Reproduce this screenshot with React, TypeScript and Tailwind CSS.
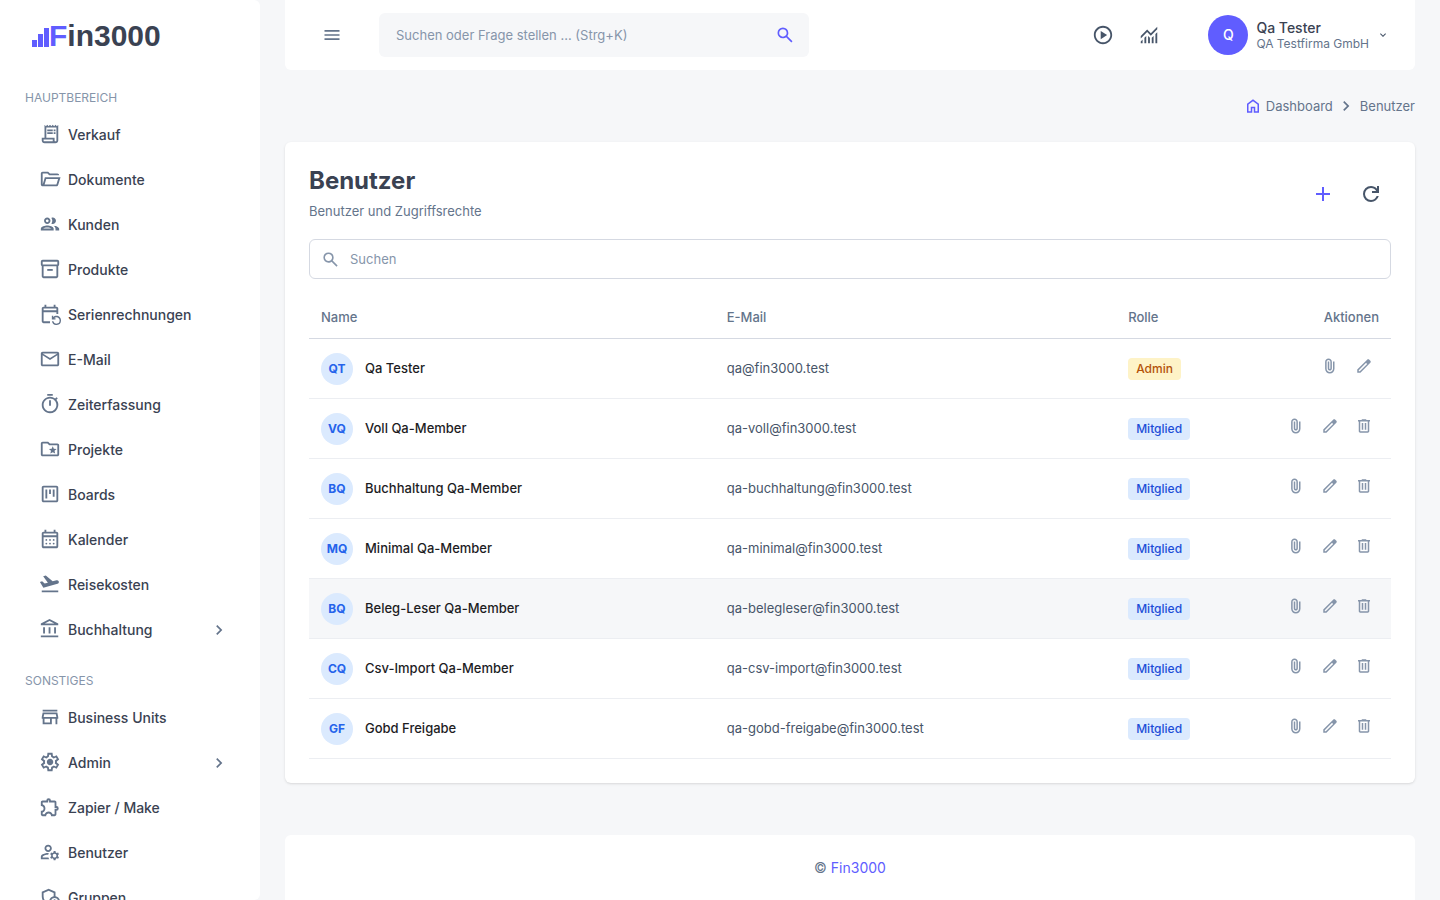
import type { ReactNode } from "react";
import type { IconType } from "react-icons";
import {
    MdAdd,
    MdChevronRight,
    MdKeyboardArrowDown,
    MdMenu,
    MdOutlineAccountBalance,
    MdOutlineAdminPanelSettings,
    MdOutlineEventRepeat,
    MdOutlineExtension,
    MdOutlineFolderSpecial,
    MdOutlineGroup,
    MdOutlineInventory2,
    MdOutlineMail,
    MdOutlineManageAccounts,
    MdOutlinePlayCircle,
    MdOutlineReceiptLong,
    MdOutlineStore,
    MdOutlineTimer,
    MdOutlineViewKanban,
} from "react-icons/md";

type IconProps = { className?: string };

function Symbol({ d, className }: { d: string; className?: string }) {
    return (
        <svg viewBox="0 -960 960 960" fill="currentColor" className={className} aria-hidden="true">
            <path d={d} />
        </svg>
    );
}

const HomeIcon = ({ className }: IconProps) => (
    <Symbol
        className={className}
        d="M240-200h120v-240h240v240h120v-360L480-740 240-560v360Zm-80 80v-480l320-240 320 240v480H520v-240h-80v240H160Z"
    />
);

const SearchIcon = ({ className }: IconProps) => (
    <Symbol
        className={className}
        d="M784-120 532-372q-30 24-69 38t-83 14q-109 0-184.500-75.500T120-580q0-109 75.500-184.500T380-840q109 0 184.500 75.500T640-580q0 44-14 83t-38 69l252 252-56 56ZM380-400q75 0 127.500-52.500T560-580q0-75-52.500-127.500T380-760q-75 0-127.500 52.500T200-580q0 75 52.500 127.500T380-400Z"
    />
);

const RefreshIcon = ({ className }: IconProps) => (
    <Symbol
        className={className}
        d="M480-160q-134 0-227-93t-93-227q0-134 93-227t227-93q69 0 132 28.500T720-690v-110h80v280H520v-80h168q-32-56-87.500-88T480-720q-100 0-170 70t-70 170q0 100 70 170t170 70q77 0 139-44t87-116h84q-28 106-114 173t-196 67Z"
    />
);

const FolderOpenIcon = ({ className }: IconProps) => (
    <Symbol
        className={className}
        d="M160-160q-33 0-56.500-23.500T80-240v-480q0-33 23.500-56.500T160-800h240l80 80h320q33 0 56.500 23.500T880-640H447l-80-80H160v480l96-320h684L837-217q-8 26-29.500 41.500T760-160H160Zm84-80h516l72-240H316l-72 240Z"
    />
);

const CalendarIcon = ({ className }: IconProps) => (
    <svg viewBox="0 -960 960 960" fill="currentColor" className={className} aria-hidden="true">
        <path d="M200-80q-33 0-56.500-23.500T120-160v-560q0-33 23.500-56.500T200-800h40v-80h80v80h320v-80h80v80h40q33 0 56.500 23.500T840-720v560q0 33-23.500 56.500T760-80H200Zm0-80h560v-400H200v400Zm0-480h560v-80H200v80Z" />
        {[320, 480, 640].map((cx) => (
            <g key={cx}>
                <circle cx={cx} cy="-440" r="40" />
                <circle cx={cx} cy="-280" r="40" />
            </g>
        ))}
    </svg>
);

const FlightIcon = ({ className }: IconProps) => (
    <Symbol
        className={className}
        d="M120-120v-80h720v80H120Zm70-200L40-570l96-26 112 94 140-37-207-276 116-31 299 251 170-46q32-9 60.500 7.500T864-585q9 32-7.500 60.500T808-487L190-320Z"
    />
);

const AttachIcon = ({ className }: IconProps) => (
    <Symbol
        className={className}
        d="M720-330q0 104-73 177T470-80q-104 0-177-73t-73-177v-370q0-75 52.500-127.500T400-880q75 0 127.500 52.500T580-700v350q0 46-32 78t-78 32q-46 0-78-32t-32-78v-370h80v370q0 13 8.500 21.500T470-320q13 0 21.500-8.500T500-350v-350q-1-42-29.500-71T400-800q-42 0-71 29t-29 71v370q-1 71 49 120.500T470-160q70 0 119-49.500T640-330v-390h80v390Z"
    />
);

const MonitoringIcon = ({ className }: IconProps) => (
    <Symbol
        className={className}
        d="M120-120v-80l80-80v160h-80Zm160 0v-240l80-80v320h-80Zm160 0v-320l80 81v239h-80Zm160 0v-239l80-80v319h-80Zm160 0v-400l80-80v480h-80ZM120-327v-113l280-280 160 160 280-280v113L560-447 400-607 120-327Z"
    />
);

const SettingsIcon = ({ className }: IconProps) => (
    <Symbol
        className={className}
        d="m370-80-16-128q-13-5-24.500-12T307-235l-119 50L78-375l103-78q-1-7-1-13.500v-27q0-6.500 1-13.500L78-585l110-190 119 50q11-8 23-15t24-12l16-128h220l16 128q13 5 24.500 12t22.500 15l119-50 110 190-103 78q1 7 1 13.500v27q0 6.500-2 13.500l103 78-110 190-118-50q-11 8-23 15t-24 12L590-80H370Zm70-80h79l14-106q31-8 57.500-23.500T639-327l99 41 39-68-86-65q5-14 7-29.500t2-31.500q0-16-2-31.500t-7-29.500l86-65-39-68-99 42q-22-23-48.500-38.500T533-694l-13-106h-79l-14 106q-31 8-57.500 23.500T321-633l-99-41-39 68 86 64q-5 15-7 30t-2 32q0 16 2 31t7 30l-86 65 39 68 99-42q22 23 48.500 38.500T427-266l13 106Zm42-180q58 0 99-41t41-99q0-58-41-99t-99-41q-59 0-99.500 41T342-480q0 58 40.500 99t99.500 41Z"
    />
);

const EditIcon = ({ className }: IconProps) => (
    <Symbol
        className={className}
        d="M200-200h57l391-391-57-57-391 391v57Zm-80 80v-170l528-527q12-11 26.500-17t30.500-6q16 0 31 6t26 18l55 56q12 11 17.500 26t5.500 30q0 16-5.500 30.500T817-647L290-120H120Zm640-584-56-56 56 56Zm-141 85-28-29 57 57-29-28Z"
    />
);

const DeleteIcon = ({ className }: IconProps) => (
    <Symbol
        className={className}
        d="M280-120q-33 0-56.500-23.500T200-200v-520h-40v-80h200v-40h240v40h200v80h-40v520q0 33-23.500 56.500T680-120H280Zm400-600H280v520h400v-520ZM360-280h80v-360h-80v360Zm160 0h80v-360h-80v360Z"
    />
);

type NavEntry = {
    label: string;
    icon: IconType | ((props: IconProps) => ReactNode);
    hasChildren?: boolean;
};

const mainNav: NavEntry[] = [
    { label: "Verkauf", icon: MdOutlineReceiptLong },
    { label: "Dokumente", icon: FolderOpenIcon },
    { label: "Kunden", icon: MdOutlineGroup },
    { label: "Produkte", icon: MdOutlineInventory2 },
    { label: "Serienrechnungen", icon: MdOutlineEventRepeat },
    { label: "E-Mail", icon: MdOutlineMail },
    { label: "Zeiterfassung", icon: MdOutlineTimer },
    { label: "Projekte", icon: MdOutlineFolderSpecial },
    { label: "Boards", icon: MdOutlineViewKanban },
    { label: "Kalender", icon: CalendarIcon },
    { label: "Reisekosten", icon: FlightIcon },
    { label: "Buchhaltung", icon: MdOutlineAccountBalance, hasChildren: true },
];

const otherNav: NavEntry[] = [
    { label: "Business Units", icon: MdOutlineStore },
    { label: "Admin", icon: SettingsIcon, hasChildren: true },
    { label: "Zapier / Make", icon: MdOutlineExtension },
    { label: "Benutzer", icon: MdOutlineManageAccounts },
    { label: "Gruppen", icon: MdOutlineAdminPanelSettings },
];

const users = [
    { initials: "QT", name: "Qa Tester", email: "qa@fin3000.test", role: "Admin" },
    { initials: "VQ", name: "Voll Qa-Member", email: "qa-voll@fin3000.test", role: "Mitglied" },
    { initials: "BQ", name: "Buchhaltung Qa-Member", email: "qa-buchhaltung@fin3000.test", role: "Mitglied" },
    { initials: "MQ", name: "Minimal Qa-Member", email: "qa-minimal@fin3000.test", role: "Mitglied" },
    { initials: "BQ", name: "Beleg-Leser Qa-Member", email: "qa-belegleser@fin3000.test", role: "Mitglied", active: true },
    { initials: "CQ", name: "Csv-Import Qa-Member", email: "qa-csv-import@fin3000.test", role: "Mitglied" },
    { initials: "GF", name: "Gobd Freigabe", email: "qa-gobd-freigabe@fin3000.test", role: "Mitglied" },
];

function Logo() {
    return (
        <a href="#" aria-label="Fin3000" className="flex h-9 items-center pl-8">
            <svg viewBox="0 0 17 24" className="h-6 w-[17px] text-[#605dff]" fill="currentColor" aria-hidden="true">
                <rect x="0" y="16" width="5" height="7" />
                <rect x="6" y="10" width="5" height="13" />
                <rect x="12" y="4" width="5" height="19" />
            </svg>
            <span className="font-['Liberation_Sans',sans-serif] text-3xl leading-9 font-bold text-[#3a4252]">
                <span className="text-[#605dff]">F</span>in3000
            </span>
        </a>
    );
}

function NavSection({ title, entries }: { title: string; entries: NavEntry[] }) {
    return (
        <div className="mb-[21px]">
            <h2 className="mb-1.5 pl-[25px] text-xs font-normal text-[#8695aa] uppercase">{title}</h2>
            <ul>
                {entries.map(({ label, icon: Icon, hasChildren }) => (
                    <li key={label}>
                        <a href="#" className="flex h-[45px] items-center pr-[31px] pl-[39px] text-sm font-medium text-[#3a4252]">
                            <Icon className="mr-[7px] mb-0.5 size-[22px] shrink-0 text-[#64748b]" />
                            <span className="flex-1">{label}</span>
                            {hasChildren && <MdChevronRight className="size-5 text-[#64748b]" />}
                        </a>
                    </li>
                ))}
            </ul>
        </div>
    );
}

function Header() {
    return (
        <header className="flex h-[70px] items-center rounded-b-md bg-white pr-[26px] pl-[37px]">
            <button type="button" aria-label="Menü" className="mr-[37px] text-[#64748b]">
                <MdMenu className="size-5" />
            </button>
            <form className="flex h-11 w-[430px] items-center rounded-md bg-[#f6f7f9] pr-[14px] pl-[17px]">
                <input
                    type="text"
                    aria-label="Suchen oder Frage stellen"
                    placeholder="Suchen oder Frage stellen ... (Strg+K)"
                    className="min-w-0 flex-1 bg-transparent pt-0.5 text-[13px] outline-none placeholder:text-[#8695aa]"
                />
                <button type="button" aria-label="Suche starten" className="text-[#605dff]">
                    <SearchIcon className="size-5" />
                </button>
            </form>
            <div className="ml-auto flex items-center text-[#475569]">
                <button type="button" aria-label="Abspielen" className="mr-6">
                    <MdOutlinePlayCircle className="size-[22px]" />
                </button>
                <button type="button" aria-label="Auswertungen" className="mr-12">
                    <MonitoringIcon className="size-[22px]" />
                </button>
                <button type="button" className="flex items-center text-left">
                    <span className="mr-2 flex size-10 items-center justify-center rounded-full bg-[#605dff] text-sm font-medium text-white">
                        Q
                    </span>
                    <span className="mr-2 flex flex-col pt-0.5">
                        <span className="text-sm leading-4 font-medium text-[#3a4252]">Qa Tester</span>
                        <span className="text-xs leading-4 text-[#64748b]">QA Testfirma GmbH</span>
                    </span>
                    <MdKeyboardArrowDown className="size-3" />
                </button>
            </div>
        </header>
    );
}

function UserTable() {
    return (
        <table className="mt-4 w-full table-fixed border-collapse text-[13px]">
            <thead>
                <tr className="h-[43px] border-b border-[#d5d9e2] text-left text-[#64748b]">
                    <th className="w-[37.5%] px-3 pt-0.5 font-medium">Name</th>
                    <th className="w-[37.1%] px-3 pt-0.5 font-medium">E-Mail</th>
                    <th className="w-[10%] px-3 pt-0.5 font-medium">Rolle</th>
                    <th className="px-3 pt-0.5 text-right font-medium">Aktionen</th>
                </tr>
            </thead>
            <tbody>
                {users.map((user) => (
                    <tr
                        key={user.email}
                        className={`h-[60px] border-b border-[#eceef2] ${user.active ? "bg-[#f6f7f9]" : "hover:bg-[#f6f7f9]"}`}
                    >
                        <td className="px-3 pt-0.5">
                            <div className="flex items-center">
                                <span className="mr-3 flex size-8 items-center justify-center rounded-full bg-[#dbeafe] text-xs font-bold text-[#2563eb]">
                                    {user.initials}
                                </span>
                                <span className="font-medium text-[#1d1d1f]">{user.name}</span>
                            </div>
                        </td>
                        <td className="px-3 pt-0.5 text-[#475569]">{user.email}</td>
                        <td className="px-3 pt-0.5">
                            <span
                                className={`inline-flex h-[22px] items-center rounded-sm px-2 text-xs font-medium ${
                                    user.role === "Admin" ? "bg-[#fef3c7] text-[#b45309]" : "bg-[#dbeafe] text-[#1d4ed8]"
                                }`}
                            >
                                {user.role}
                            </span>
                        </td>
                        <td className="px-3 pb-1">
                            <div className="flex justify-end gap-1 text-[#8695aa]">
                                <button type="button" aria-label="Anhänge" className="flex size-[30px] items-center justify-center">
                                    <AttachIcon className="size-[18px]" />
                                </button>
                                <button type="button" aria-label="Bearbeiten" className="flex size-[30px] items-center justify-center">
                                    <EditIcon className="size-[18px]" />
                                </button>
                                {user.role !== "Admin" && (
                                    <button type="button" aria-label="Löschen" className="flex size-[30px] items-center justify-center">
                                        <DeleteIcon className="size-[18px]" />
                                    </button>
                                )}
                            </div>
                        </td>
                    </tr>
                ))}
            </tbody>
        </table>
    );
}

export default function App() {
    return (
        <div className="flex min-h-screen bg-[#f6f7f9] font-['Inter',sans-serif]">
            {/* Sidebar */}
            <aside className="sticky top-0 h-screen w-[260px] shrink-0 overflow-hidden rounded-r-md bg-white pt-[18px]">
                <Logo />
                <nav className="mt-9">
                    <NavSection title="Hauptbereich" entries={mainNav} />
                    <NavSection title="Sonstiges" entries={otherNav} />
                </nav>
            </aside>

            <div className="flex min-w-0 flex-1 flex-col px-[25px]">
                <Header />

                {/* Breadcrumb */}
                <nav aria-label="Breadcrumb" className="flex items-center justify-end py-[26px] text-[13px] leading-5 text-[#64748b]">
                    <a href="#" className="flex items-center">
                        <HomeIcon className="mr-1 size-[18px] text-[#605dff]" />
                        Dashboard
                    </a>
                    <MdChevronRight className="mr-1 ml-[3px] size-5" />
                    <span>Benutzer</span>
                </nav>

                <main className="rounded-md bg-white p-6 shadow-sm">
                    <div className="mb-[17px] flex items-center justify-between">
                        <div>
                            <h1 className="text-2xl leading-[30px] font-bold text-[#3a4252]">Benutzer</h1>
                            <p className="mt-[5px] mb-px text-[13px] leading-5 text-[#64748b]">Benutzer und Zugriffsrechte</p>
                        </div>
                        <div className="flex gap-2">
                            <button type="button" aria-label="Hinzufügen" className="flex size-10 items-center justify-center text-[#605dff]">
                                <MdAdd className="size-6" />
                            </button>
                            <button type="button" aria-label="Aktualisieren" className="flex size-10 items-center justify-center text-[#475569]">
                                <RefreshIcon className="size-6" />
                            </button>
                        </div>
                    </div>

                    <label className="flex h-10 items-center rounded-md border border-[#d5d9e2] px-[11px]">
                        <SearchIcon className="mr-[10px] size-[19px] text-[#8695aa]" />
                        <input
                            type="text"
                            aria-label="Suchen"
                            placeholder="Suchen"
                            className="min-w-0 flex-1 bg-transparent pt-0.5 text-[13px] outline-none placeholder:text-[#8695aa]"
                        />
                    </label>

                    <UserTable />
                </main>

                <footer className="mt-[52px] flex-1 rounded-t-md bg-white pt-[21px] pb-5 text-center text-sm leading-6 text-[#64748b]">
                    © <a href="#" className="text-[#605dff]">Fin3000</a>
                </footer>
            </div>
        </div>
    );
}
